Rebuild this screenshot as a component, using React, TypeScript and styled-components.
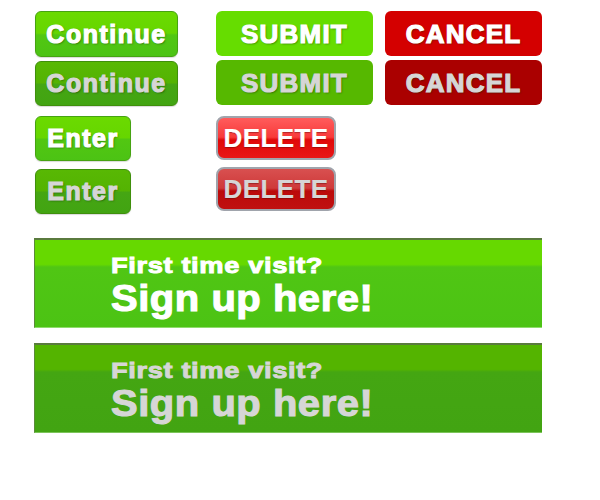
import React from "react";
import styled, { createGlobalStyle, css } from "styled-components";

const Global = createGlobalStyle`
  html, body { margin: 0; padding: 0; background: #ffffff; }
  body { font-family: "Liberation Sans", Arial, sans-serif; }
`;

const Page = styled.div`
  width: 600px;
  height: 500px;
  padding: 11px 0 0 34px;
  box-sizing: border-box;
`;

const ButtonGrid = styled.div`
  display: grid;
  grid-template-columns: 182px 169px 156px;
  row-gap: 10px;
  align-items: start;
`;

const Stack = styled.div<{ $gap: number }>`
  display: flex;
  flex-direction: column;
  align-items: flex-start;
  gap: ${(p) => p.$gap}px;
`;

const Label = styled.span<{ $hover?: boolean }>`
  font-family: "Liberation Sans", Arial, sans-serif;
  font-weight: 700;
  color: ${(p) => (p.$hover ? "#d6d6d6" : "#ffffff")};
  -webkit-text-stroke: 1.2px ${(p) => (p.$hover ? "#d6d6d6" : "#ffffff")};
  text-shadow: 1px 1px 2px rgba(0, 40, 0, 0.55);
  white-space: nowrap;
  line-height: 1;
`;

const GlossyGreen = styled.button<{ $hover?: boolean; $w: number; $h: number }>`
  display: flex;
  align-items: center;
  justify-content: center;
  width: ${(p) => p.$w}px;
  height: ${(p) => p.$h}px;
  margin-left: 1px;
  padding: 0;
  border-radius: 6px;
  border: 1px solid ${(p) => (p.$hover ? "#3f8f0c" : "#46a312")};
  box-sizing: border-box;
  background: ${(p) =>
    p.$hover
      ? "linear-gradient(#58b804 0%, #54b302 48%, #45a613 52%, #42a412 100%)"
      : "linear-gradient(#6bda00 0%, #66d600 48%, #52c712 52%, #4cc314 100%)"};
  box-shadow: 0 1px 1px rgba(0, 0, 0, 0.15);
  cursor: pointer;
  ${Label} {
    font-size: 25px;
    letter-spacing: 1.5px;
  }
`;

const FlatButton = styled.button<{ $color: string }>`
  display: flex;
  align-items: center;
  justify-content: center;
  width: 157px;
  height: 45px;
  padding: 0;
  border: none;
  border-radius: 6px;
  background: ${(p) => p.$color};
  cursor: pointer;
  ${Label} {
    font-size: 26px;
    letter-spacing: 1.2px;
  }
`;

const DeleteButton = styled.button<{ $hover?: boolean }>`
  display: flex;
  align-items: center;
  justify-content: center;
  width: 120px;
  height: 44px;
  padding: 0;
  border-radius: 8px;
  border: 2px solid #a0a4ac;
  box-sizing: border-box;
  background: ${(p) =>
    p.$hover
      ? "linear-gradient(#d85050 0%, #cf3a3a 48%, #bb0a0a 55%, #c01010 100%)"
      : "linear-gradient(#ff5c5c 0%, #f83a3a 48%, #e00808 55%, #e81616 100%)"};
  cursor: pointer;
  ${Label} {
    font-size: 26px;
    font-weight: 700;
    -webkit-text-stroke: 0.2px currentColor;
    letter-spacing: 0.4px;
    text-shadow: 0 1px 1px rgba(80, 0, 0, 0.4);
  }
`;

const Banners = styled.div`
  display: flex;
  flex-direction: column;
  gap: 15px;
  margin-top: 24px;
`;

const Banner = styled.a<{ $hover?: boolean }>`
  display: flex;
  flex-direction: column;
  align-items: flex-start;
  justify-content: center;
  width: 508px;
  height: 90px;
  box-sizing: border-box;
  padding: 4px 0 0 76px;
  border-top: 2px solid #5a7a3e;
  border-left: 1px solid #5a8a3a;
  border-bottom: 1px solid ${(p) => (p.$hover ? "#7cc45a" : "#8fdc6c")};
  text-decoration: none;
  ${(p) =>
    p.$hover
      ? css`
          background: linear-gradient(#54b400 0%, #54b400 28%, #44a612 31%, #42a412 100%);
        `
      : css`
          background: linear-gradient(#66d900 0%, #66d900 28%, #50c614 31%, #4cc314 100%);
        `}
`;

const BannerSmall = styled(Label)`
  font-size: 22px;
  letter-spacing: 0.5px;
  -webkit-text-stroke: 0.9px currentColor;
  text-shadow: none;
  transform: scaleX(1.24);
  transform-origin: left center;
`;

const BannerBig = styled(Label)`
  font-size: 37px;
  letter-spacing: 0.5px;
  -webkit-text-stroke: 1.1px currentColor;
  text-shadow: none;
  margin-top: 3px;
  transform: scaleX(1.08);
  transform-origin: left center;
`;

export default function App() {
  return (
    <>
      <Global />
      <Page>
        <ButtonGrid>
          <Stack $gap={4}>
            <GlossyGreen $w={143} $h={46}>
              <Label>Continue</Label>
            </GlossyGreen>
            <GlossyGreen $w={143} $h={45} $hover>
              <Label $hover>Continue</Label>
            </GlossyGreen>
          </Stack>
          <Stack $gap={4}>
            <FlatButton $color="#66dd00">
              <Label>SUBMIT</Label>
            </FlatButton>
            <FlatButton $color="#56b800">
              <Label $hover>SUBMIT</Label>
            </FlatButton>
          </Stack>
          <Stack $gap={4}>
            <FlatButton $color="#d40000">
              <Label>CANCEL</Label>
            </FlatButton>
            <FlatButton $color="#aa0000">
              <Label $hover>CANCEL</Label>
            </FlatButton>
          </Stack>
          <Stack $gap={8}>
            <GlossyGreen $w={96} $h={45}>
              <Label>Enter</Label>
            </GlossyGreen>
            <GlossyGreen $w={96} $h={45} $hover>
              <Label $hover>Enter</Label>
            </GlossyGreen>
          </Stack>
          <Stack $gap={7}>
            <DeleteButton>
              <Label>DELETE</Label>
            </DeleteButton>
            <DeleteButton $hover>
              <Label $hover>DELETE</Label>
            </DeleteButton>
          </Stack>
        </ButtonGrid>
        <Banners>
          <Banner>
            <BannerSmall>First time visit?</BannerSmall>
            <BannerBig>Sign up here!</BannerBig>
          </Banner>
          <Banner $hover>
            <BannerSmall $hover>First time visit?</BannerSmall>
            <BannerBig $hover>Sign up here!</BannerBig>
          </Banner>
        </Banners>
      </Page>
    </>
  );
}
